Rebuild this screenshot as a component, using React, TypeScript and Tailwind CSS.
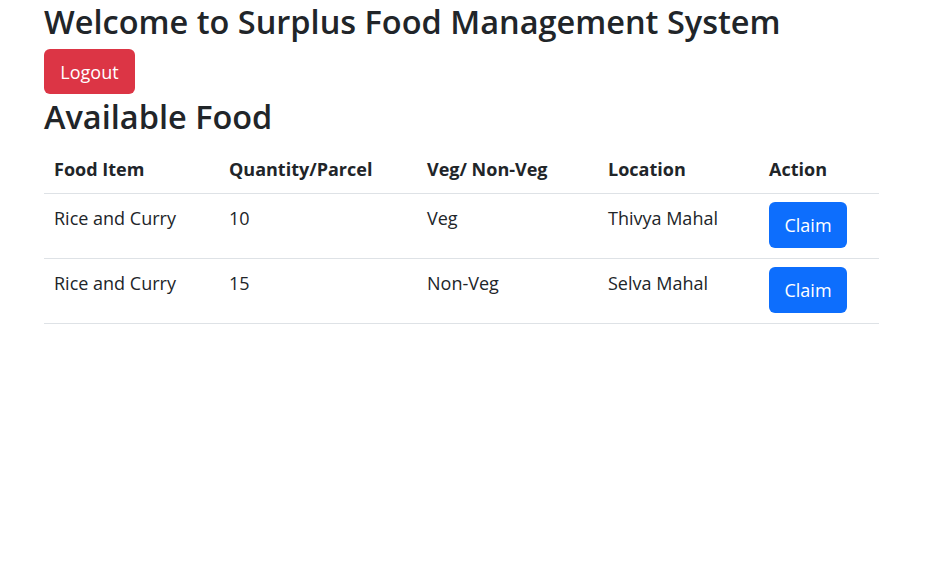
import React from 'react';

type FoodRow = {
  item: string;
  qty: number;
  type: string;
  location: string;
};

const rows: FoodRow[] = [
  { item: 'Rice and Curry', qty: 10, type: 'Veg', location: 'Thivya Mahal' },
  { item: 'Rice and Curry', qty: 15, type: 'Non-Veg', location: 'Selva Mahal' },
];

const App: React.FC = () => {
  return (
    <div className="min-h-screen bg-white text-[#212529] font-['Open_Sans',sans-serif]">
      <div className="ml-[44px] w-[835px]">
        <h2 className="text-[32.5px] font-semibold leading-[44px] m-0">
          Welcome to Surplus Food Management System
        </h2>
        <button className="mt-[5px] h-[45px] w-[91px] rounded-[6px] bg-[#dc3545] text-white text-[18px] leading-none">
          Logout
        </button>
        <h2 className="text-[32.5px] font-semibold leading-[42px] mt-[2px] mb-[8px]">
          Available Food
        </h2>
        <table className="w-full border-collapse text-[18px] text-left">
          <colgroup>
            <col className="w-[175px]" />
            <col className="w-[198px]" />
            <col className="w-[181px]" />
            <col className="w-[161px]" />
            <col className="w-[120px]" />
          </colgroup>
          <thead>
            <tr className="border-b border-[#dee2e6]">
              <th className="px-[10px] h-[47px] font-bold align-middle">Food Item</th>
              <th className="px-[10px] font-bold align-middle">Quantity/Parcel</th>
              <th className="px-[10px] font-bold align-middle">Veg/ Non-Veg</th>
              <th className="px-[10px] font-bold align-middle">Location</th>
              <th className="px-[10px] font-bold align-middle">Action</th>
            </tr>
          </thead>
          <tbody>
            {rows.map((r, i) => (
              <tr key={i} className="border-b border-[#dee2e6]">
                <td className="px-[10px] pt-[11px] align-top h-[65px]">{r.item}</td>
                <td className="px-[10px] pt-[11px] align-top">{r.qty}</td>
                <td className="px-[10px] pt-[11px] align-top">{r.type}</td>
                <td className="px-[10px] pt-[11px] align-top">{r.location}</td>
                <td className="px-[10px] pt-[8px] align-top">
                  <button className="h-[46px] w-[78px] rounded-[6px] bg-[#0d6efd] text-white text-[18px] leading-none">
                    Claim
                  </button>
                </td>
              </tr>
            ))}
          </tbody>
        </table>
      </div>
    </div>
  );
};

export default App;
